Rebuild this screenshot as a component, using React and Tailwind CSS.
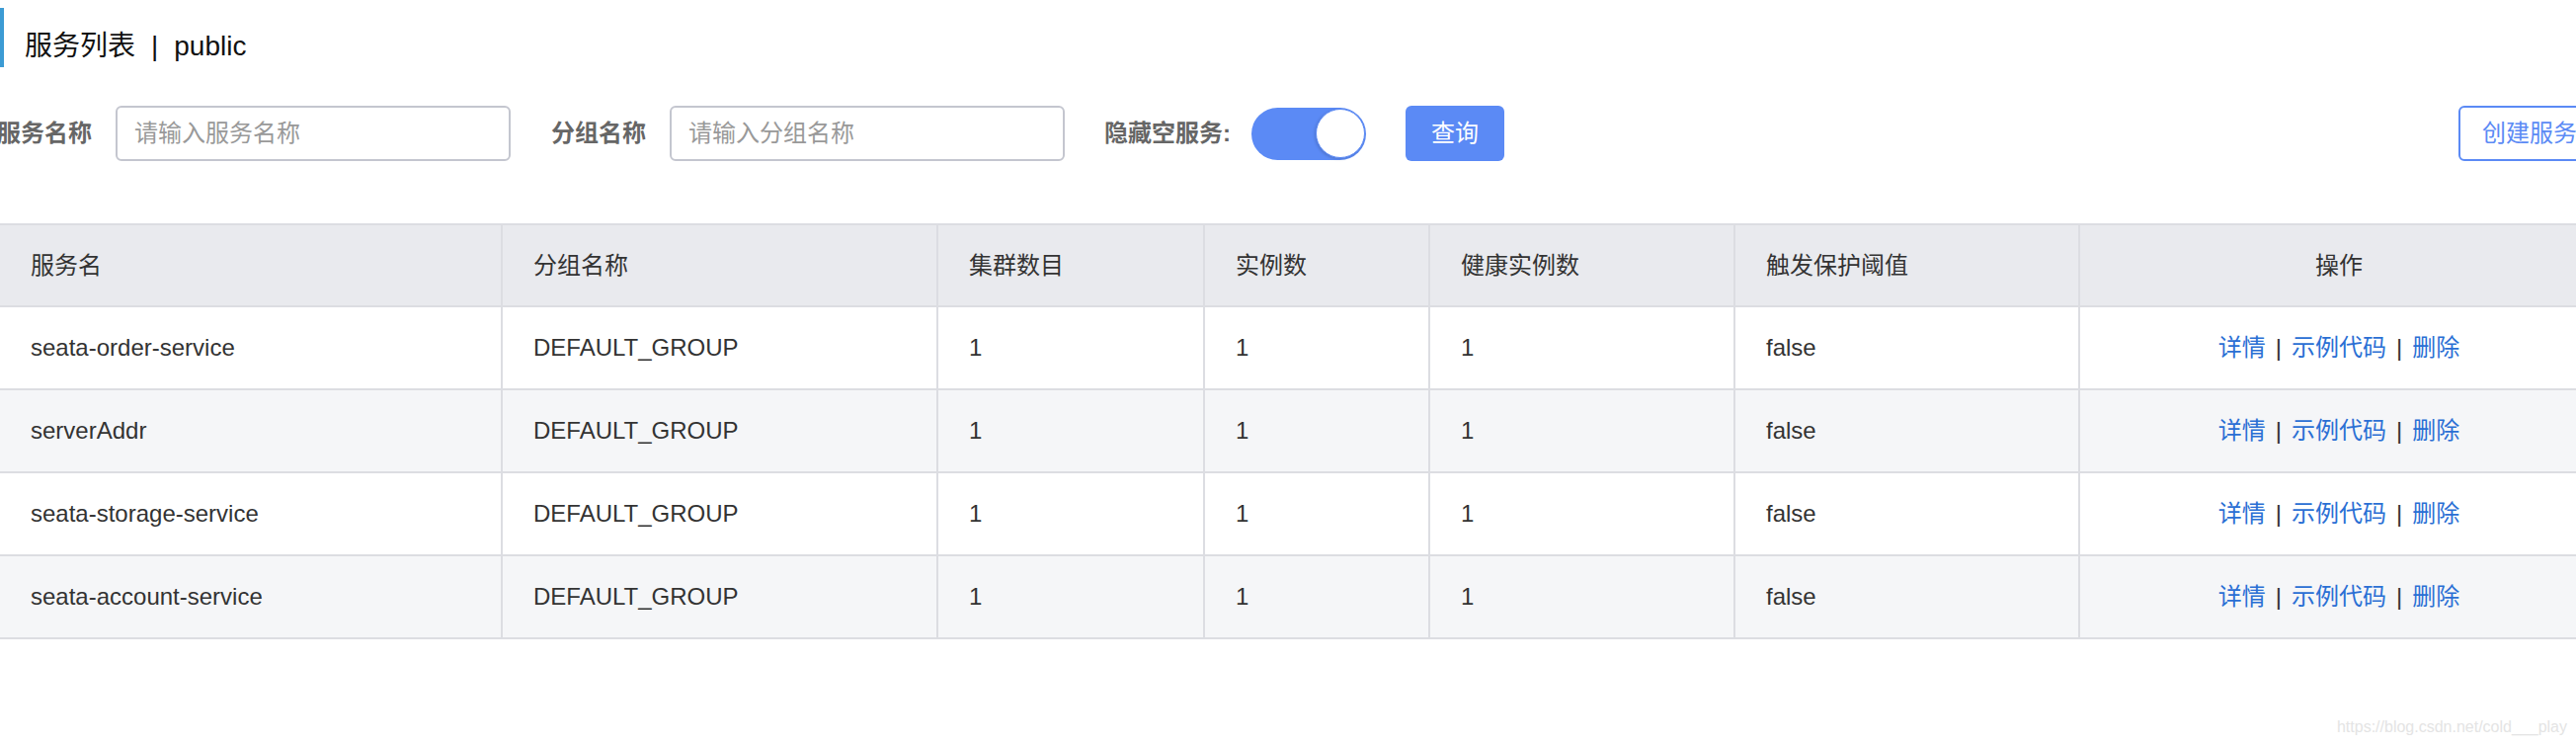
import React from 'react';

const rows = [
  { name: 'seata-order-service', group: 'DEFAULT_GROUP', clusters: 1, instances: 1, healthy: 1, threshold: 'false' },
  { name: 'serverAddr', group: 'DEFAULT_GROUP', clusters: 1, instances: 1, healthy: 1, threshold: 'false' },
  { name: 'seata-storage-service', group: 'DEFAULT_GROUP', clusters: 1, instances: 1, healthy: 1, threshold: 'false' },
  { name: 'seata-account-service', group: 'DEFAULT_GROUP', clusters: 1, instances: 1, healthy: 1, threshold: 'false' },
];

const gridCols = 'grid grid-cols-[509px_441px_270px_228px_309px_349px_524px]';
const cell = 'flex items-center pl-[31px] border-r-2 border-[#dcdde2]';

function SearchField({ label, placeholder, className = '' }) {
  return (
    <div className={`flex items-center ${className}`}>
      <span className="text-[24px] font-bold text-[#666] leading-none">{label}</span>
      <input
        className="ml-[24px] w-[400px] h-[56px] rounded-[6px] border-2 border-[#c4c6cf] px-[17px] text-[24px] text-[#333] placeholder:text-[#999] outline-none"
        placeholder={placeholder}
      />
    </div>
  );
}

export default function App() {
  return (
    <div className="relative w-[2608px] h-[756px] overflow-hidden bg-white font-['Liberation_Sans','Noto_Sans_CJK_SC',sans-serif] text-[#333]">
      {/* title */}
      <div className="mt-[8px] h-[60px] border-l-4 border-[#3c9bd4] pl-[21px] pt-[18px] flex items-center text-[28px] text-[#111]">
        服务列表<span className="mx-[16px]">|</span>public
      </div>

      {/* filters */}
      <div className="mt-[39px] w-[2636px] -ml-[3px] flex items-center">
        <SearchField label="服务名称" placeholder="请输入服务名称" />
        <SearchField label="分组名称" placeholder="请输入分组名称" className="ml-[41px]" />
        <span className="ml-[40px] text-[24px] font-bold text-[#666] leading-none">隐藏空服务:</span>
        <div className="ml-[21px] w-[116px] h-[53px] rounded-full bg-[#5b8af5] flex items-center justify-end pr-[1px]">
          <div className="w-[50px] h-[50px] rounded-full bg-white border border-[#5b8af5] shadow-[-1px_1px_3px_rgba(0,0,0,0.15)]" />
        </div>
        <button className="ml-[40px] w-[100px] h-[56px] rounded-[6px] bg-[#5b8af5] text-white text-[24px]">查询</button>
        <button className="ml-auto h-[56px] px-[22px] rounded-[6px] border-2 border-[#5b8af5] text-[#5b8af5] text-[24px] whitespace-nowrap">创建服务</button>
      </div>

      {/* table */}
      <div className="mt-[63px] w-[2630px] border-t-2 border-[#dcdde2] text-[24px]">
        <div className={`${gridCols} h-[83px] bg-[#e9eaee] border-b-2 border-[#dcdde2] text-[#333]`}>
          <div className={cell}>服务名</div>
          <div className={cell}>分组名称</div>
          <div className={cell}>集群数目</div>
          <div className={cell}>实例数</div>
          <div className={cell}>健康实例数</div>
          <div className={cell}>触发保护阈值</div>
          <div className="flex items-center justify-center">操作</div>
        </div>
        {rows.map((r, i) => (
          <div
            key={r.name}
            className={`${gridCols} h-[84px] border-b-2 border-[#dcdde2] ${i % 2 === 1 ? 'bg-[#f5f6f8]' : 'bg-white'}`}
          >
            <div className={cell}>{r.name}</div>
            <div className={cell}>{r.group}</div>
            <div className={cell}>{r.clusters}</div>
            <div className={cell}>{r.instances}</div>
            <div className={cell}>{r.healthy}</div>
            <div className={cell}>{r.threshold}</div>
            <div className="flex items-center justify-center">
              <a className="text-[#2a6fd4] cursor-pointer">详情</a>
              <span className="mx-[10px] text-[#333]">|</span>
              <a className="text-[#2a6fd4] cursor-pointer">示例代码</a>
              <span className="mx-[10px] text-[#333]">|</span>
              <a className="text-[#2a6fd4] cursor-pointer">删除</a>
            </div>
          </div>
        ))}
      </div>

      {/* watermark */}
      <div className="absolute right-[9px] bottom-[8px] text-[16px] text-[#e4e4e4]">https://blog.csdn.net/cold___play</div>
    </div>
  );
}
